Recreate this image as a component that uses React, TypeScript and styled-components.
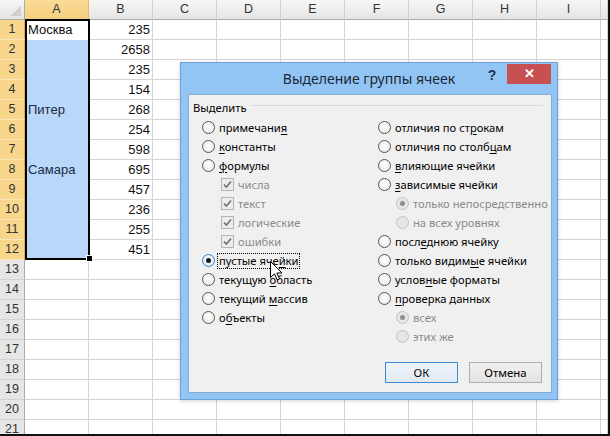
import React from "react";
import styled, { createGlobalStyle } from "styled-components";

const Global = createGlobalStyle`
  html, body { margin: 0; padding: 0; background: #fff; }
  body { font-family: "Liberation Sans", Arial, sans-serif; }
`;

const Page = styled.div`
  position: relative;
  width: 608px;
  height: 434px;
  border-right: 2px solid #111;
  border-bottom: 2px solid #111;
  overflow: hidden;
  background: #fff;
`;

const Sheet = styled.div`
  display: grid;
  grid-template-columns: 25px repeat(9, 64px) 1fr;
  grid-auto-rows: 20px;
`;

const Corner = styled.div`
  box-sizing: border-box;
  background: linear-gradient(#f6f6f6, #e4e4e4);
  border-right: 1px solid #ababab;
  border-bottom: 1px solid #ababab;
  display: flex;
  align-items: flex-end;
  justify-content: flex-end;
  padding: 0 3px 3px 0;
  &::after {
    content: "";
    width: 11px;
    height: 11px;
    background: linear-gradient(135deg, transparent 52%, #cfcfcf 52%);
  }
`;

const ColHead = styled.div<{ $active?: boolean }>`
  box-sizing: border-box;
  background: ${(p) =>
    p.$active ? "linear-gradient(#f9dc97, #f5cf7e)" : "linear-gradient(#f7f7f7, #e5e5e5)"};
  border-right: 1px solid ${(p) => (p.$active ? "#e8b963" : "#d0d0d0")};
  border-bottom: 1px solid ${(p) => (p.$active ? "#e2a94c" : "#ababab")};
  color: #333;
  font-size: 12.5px;
  line-height: 19px;
  text-align: center;
`;

const RowHead = styled.div<{ $active?: boolean }>`
  box-sizing: border-box;
  background: ${(p) => (p.$active ? "#f8d68b" : "#e6e6e6")};
  border-right: 1px solid ${(p) => (p.$active ? "#e2a94c" : "#a9a9a9")};
  border-bottom: 1px solid ${(p) => (p.$active ? "#fbe6b9" : "#d2d2d2")};
  color: #333;
  font-size: 12.5px;
  line-height: 19px;
  text-align: center;
`;

const Cell = styled.div<{ $sel?: boolean; $right?: boolean; $noBottom?: boolean }>`
  box-sizing: border-box;
  background: ${(p) => (p.$sel ? "#b9d7f8" : "#fff")};
  border-right: 1px solid #d4d4d4;
  border-bottom: 1px solid
    ${(p) => (p.$sel ? "#b9d7f8" : p.$noBottom ? "#fff" : "#d4d4d4")};
  color: ${(p) => (p.$sel ? "#1b2b44" : "#111")};
  font-size: 13px;
  line-height: 20px;
  padding: 0 2px 0 3px;
  text-align: ${(p) => (p.$right ? "right" : "left")};
  white-space: nowrap;
  overflow: hidden;
`;

const SelectionFrame = styled.div`
  position: absolute;
  left: 25px;
  top: 19px;
  width: 65px;
  height: 241px;
  box-sizing: border-box;
  border: 2px solid #000;
  pointer-events: none;
`;

const FillHandle = styled.div`
  position: absolute;
  left: 86px;
  top: 255px;
  width: 7px;
  height: 7px;
  box-sizing: border-box;
  background: #000;
  border: 1px solid #fff;
`;

/* ---------- dialog ---------- */

const Dialog = styled.div`
  position: absolute;
  left: 180px;
  top: 62px;
  width: 378px;
  height: 338px;
  box-sizing: border-box;
  background: #93c5f4;
  border: 1px solid #6fa1d9;
  display: flex;
  flex-direction: column;
  font-family: "Segoe UI", "Noto Sans", sans-serif;
  box-shadow: 0 1px 4px rgba(0, 0, 0, 0.18);
`;

const TitleBar = styled.div`
  height: 31px;
  display: flex;
  align-items: flex-start;
`;

const Title = styled.div`
  flex: 1;
  padding-left: 73px;
  text-align: center;
  font-size: 14px;
  line-height: 31px;
  color: #1b2838;
`;

const TitleButtons = styled.div`
  display: flex;
  align-items: flex-start;
  gap: 7px;
  padding-right: 6px;
`;

const HelpButton = styled.div`
  width: 16px;
  height: 22px;
  margin-top: 1px;
  line-height: 22px;
  text-align: center;
  font-family: "Liberation Sans", Arial, sans-serif;
  font-weight: bold;
  font-size: 14px;
  color: #24324a;
`;

const CloseButton = styled.div`
  width: 44px;
  height: 20px;
  margin-top: 1px;
  background: #c75050;
  color: #fff;
  font-family: "Liberation Sans", Arial, sans-serif;
  font-weight: bold;
  font-size: 13px;
  line-height: 20px;
  text-align: center;
`;

const Client = styled.div`
  flex: 1;
  margin: 0 5px 6px 7px;
  box-sizing: border-box;
  background: #f0f0f0;
  border: 1px solid #86acd8;
  padding: 3px 0 9px 0;
  display: flex;
  flex-direction: column;
  font-size: 11.2px;
  color: #000;
`;

const LegendRow = styled.div`
  height: 19px;
  display: flex;
  align-items: center;
  padding-left: 4px;
  padding-right: 8px;
`;

const LegendLine = styled.div`
  flex: 1;
  height: 1px;
  margin-left: 3px;
  margin-bottom: 4px;
  background: #d5dce3;
`;

const Options = styled.div`
  margin-top: 1px;
  display: grid;
  grid-template-columns: 176px 1fr;
  padding-left: 13px;
`;

const Column = styled.div`
  display: flex;
  flex-direction: column;
`;

const OptionRow = styled.div<{ $indent?: number; $disabled?: boolean }>`
  height: 19px;
  display: flex;
  align-items: center;
  gap: 4px;
  padding-left: ${(p) => p.$indent ?? 0}px;
  color: ${(p) => (p.$disabled ? "#8a8a8a" : "#000")};
  white-space: nowrap;
`;

const Label = styled.span<{ $focused?: boolean }>`
  padding: 0 1px;
  margin-left: -1px;
  line-height: 14px;
  outline: ${(p) => (p.$focused ? "1px dotted #000" : "none")};
  u {
    text-decoration: underline;
    text-underline-offset: 2px;
  }
`;

const RadioCircle = styled.span<{ $checked?: boolean; $disabled?: boolean; $hot?: boolean }>`
  flex: none;
  width: 13px;
  height: 13px;
  box-sizing: border-box;
  border-radius: 50%;
  border: 1px solid
    ${(p) => (p.$disabled ? "#c2c2c2" : p.$hot ? "#3c7fb1" : "#555")};
  background: ${(p) =>
    p.$disabled
      ? "#e6e6e6"
      : p.$hot
      ? "radial-gradient(circle at 50% 40%, #f4faff, #d6e9f9)"
      : "radial-gradient(circle at 50% 40%, #ffffff, #e6e6e6)"};
  display: flex;
  align-items: center;
  justify-content: center;
  &::after {
    content: "";
    display: ${(p) => (p.$checked ? "block" : "none")};
    width: 5px;
    height: 5px;
    border-radius: 50%;
    background: ${(p) => (p.$disabled ? "#8e8e8e" : "#1a1a1a")};
  }
`;

const CheckBoxBox = styled.span`
  flex: none;
  width: 13px;
  height: 13px;
  box-sizing: border-box;
  border: 1px solid #b5b5b5;
  background: #ececec;
  display: flex;
  align-items: center;
  justify-content: center;
`;

const ButtonRow = styled.div`
  margin-top: auto;
  display: flex;
  justify-content: flex-end;
  gap: 11px;
  padding-right: 9px;
`;

const DlgButton = styled.div<{ $default?: boolean }>`
  width: 73px;
  height: 21px;
  box-sizing: border-box;
  border: 1px solid ${(p) => (p.$default ? "#3c8bd6" : "#adadad")};
  background: ${(p) =>
    p.$default ? "linear-gradient(#eef4fa, #e1eaf3)" : "linear-gradient(#efefef, #e3e3e3)"};
  font-size: 11.4px;
  line-height: 19px;
  text-align: center;
  color: #000;
`;

const Cursor = styled.svg`
  position: absolute;
  left: 270px;
  top: 261px;
`;

/* ---------- data ---------- */

type Opt = {
  kind: "radio" | "check";
  label: string;
  indent?: number;
  checked?: boolean;
  disabled?: boolean;
  focused?: boolean;
  hot?: boolean;
};

const leftOpts: Opt[] = [
  { kind: "radio", label: "примечани&я" },
  { kind: "radio", label: "&константы" },
  { kind: "radio", label: "&формулы" },
  { kind: "check", label: "числа", indent: 19, checked: true, disabled: true },
  { kind: "check", label: "текст", indent: 19, checked: true, disabled: true },
  { kind: "check", label: "логические", indent: 19, checked: true, disabled: true },
  { kind: "check", label: "ошибки", indent: 19, checked: true, disabled: true },
  { kind: "radio", label: "пустые яче&йки", checked: true, focused: true, hot: true },
  { kind: "radio", label: "текущую &область" },
  { kind: "radio", label: "текущий &массив" },
  { kind: "radio", label: "о&бъекты" },
];

const rightOpts: Opt[] = [
  { kind: "radio", label: "отличия по ст&рокам" },
  { kind: "radio", label: "отличия по столб&цам" },
  { kind: "radio", label: "&влияющие ячейки" },
  { kind: "radio", label: "&зависимые ячейки" },
  { kind: "radio", label: "только непосредственно", indent: 18, checked: true, disabled: true },
  { kind: "radio", label: "на всех уровнях", indent: 18, disabled: true },
  { kind: "radio", label: "посл&еднюю ячейку" },
  { kind: "radio", label: "только видим&ые ячейки" },
  { kind: "radio", label: "услов&ные форматы" },
  { kind: "radio", label: "&проверка данных" },
  { kind: "radio", label: "всех", indent: 18, checked: true, disabled: true },
  { kind: "radio", label: "этих же", indent: 18, disabled: true },
];

const Accel: React.FC<{ text: string }> = ({ text }) => {
  const i = text.indexOf("&");
  if (i < 0) return <>{text}</>;
  return (
    <>
      {text.slice(0, i)}
      <u>{text.charAt(i + 1)}</u>
      {text.slice(i + 2)}
    </>
  );
};

const Option: React.FC<{ o: Opt }> = ({ o }) => (
  <OptionRow $indent={o.indent} $disabled={o.disabled}>
    {o.kind === "radio" ? (
      <RadioCircle $checked={o.checked} $disabled={o.disabled} $hot={o.hot} />
    ) : (
      <CheckBoxBox>
        {o.checked && (
          <svg width="9" height="9" viewBox="0 0 9 9">
            <path d="M1 4.6 L3.4 7 L8 1.4" fill="none" stroke="#727272" strokeWidth="1.6" />
          </svg>
        )}
      </CheckBoxBox>
    )}
    <Label $focused={o.focused}>
      <Accel text={o.label} />
    </Label>
  </OptionRow>
);

const colLetters = ["A", "B", "C", "D", "E", "F", "G", "H", "I", "J"];
const bVals = [235, 2658, 235, 154, 268, 254, 598, 695, 457, 236, 255, 451];
const aVals: Record<number, string> = { 1: "Москва", 5: "Питер", 8: "Самара" };

export default function App() {
  const rows = Array.from({ length: 21 }, (_, i) => i + 1);
  return (
    <>
      <Global />
      <Page>
        <Sheet>
          <Corner />
          {colLetters.map((c) => (
            <ColHead key={c} $active={c === "A"}>
              {c === "J" ? "" : c}
            </ColHead>
          ))}
          {rows.map((r) => (
            <React.Fragment key={r}>
              <RowHead $active={r <= 12}>{r}</RowHead>
              <Cell $sel={r >= 2 && r <= 12} $noBottom={r === 1}>
                {aVals[r] ?? ""}
              </Cell>
              <Cell $right>{r <= 12 ? bVals[r - 1] : ""}</Cell>
              {colLetters.slice(2).map((c) => (
                <Cell key={c} />
              ))}
            </React.Fragment>
          ))}
        </Sheet>
        <SelectionFrame />
        <FillHandle />

        <Dialog>
          <TitleBar>
            <Title>Выделение группы ячеек</Title>
            <TitleButtons>
              <HelpButton>?</HelpButton>
              <CloseButton>✕</CloseButton>
            </TitleButtons>
          </TitleBar>
          <Client>
            <LegendRow>
              <span>Выделить</span>
              <LegendLine />
            </LegendRow>
            <Options>
              <Column>
                {leftOpts.map((o) => (
                  <Option key={o.label} o={o} />
                ))}
              </Column>
              <Column>
                {rightOpts.map((o) => (
                  <Option key={o.label} o={o} />
                ))}
              </Column>
            </Options>
            <ButtonRow>
              <DlgButton $default>ОК</DlgButton>
              <DlgButton>Отмена</DlgButton>
            </ButtonRow>
          </Client>
        </Dialog>

        <Cursor width="13" height="20" viewBox="0 0 13 20">
          <polygon
            points="0.5,0.5 0.5,16.5 4.5,12.8 7.3,19 9.6,18 6.9,12 12,12"
            fill="#fff"
            stroke="#000"
            strokeWidth="1"
            strokeLinejoin="miter"
          />
        </Cursor>
      </Page>
    </>
  );
}
